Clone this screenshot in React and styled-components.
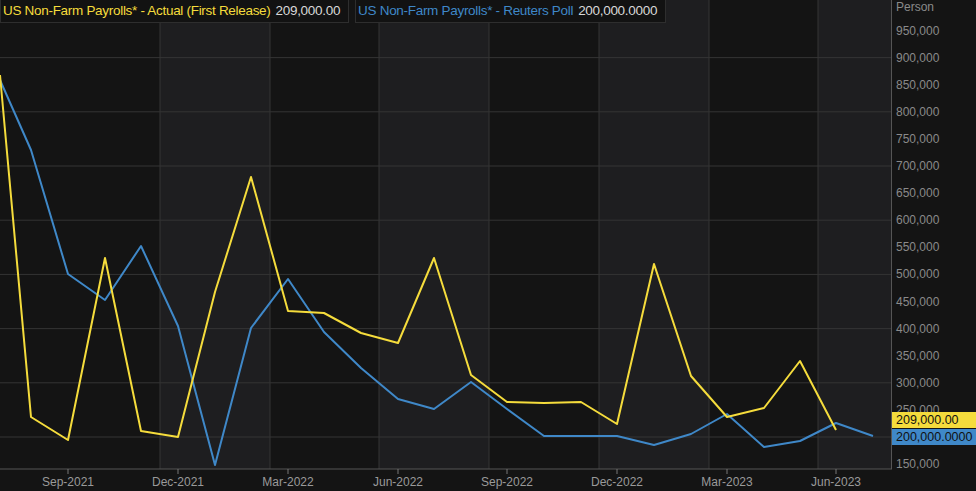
import React from "react";
import styled, { createGlobalStyle } from "styled-components";

const Global = createGlobalStyle`
  body { margin: 0; background: #141414; font-family: "Liberation Sans", Arial, sans-serif; }
`;

const Frame = styled.div`
  position: relative;
  width: 976px;
  height: 491px;
  display: flex;
  background: #141414;
  overflow: hidden;
`;

const Plot = styled.div`
  position: relative;
  width: 892px;
  height: 491px;
`;

const Legend = styled.div`
  position: absolute;
  top: 0;
  left: 0;
  display: flex;
  gap: 6px;
`;

const LegendItem = styled.div`
  background: #121212;
  border: 1px solid #2e2e2e;
  border-top: none;
  padding: 3px 8px 4px 2px;
  font-size: 13.5px;
  letter-spacing: -0.3px;
  color: ${p => p.color};
  span { color: #d8d8d8; margin-left: 5px; }
`;

const Axis = styled.div`
  position: relative;
  flex: 1;
  font-size: 12px;
  color: #8a8a8a;
`;

const AxisLabel = styled.div`
  position: absolute;
  left: 4px;
  transform: translateY(-50%);
`;

const Tag = styled.div`
  position: absolute;
  left: 0;
  right: 0;
  height: 16px;
  padding-left: 4px;
  font-size: 12.5px;
  line-height: 16px;
  color: #111;
  background: ${p => p.bg};
  transform: translateY(-50%);
`;

const yellow = [[0,75],[31,417],[68,440],[105,258],[141,431],[178,437],[215,292],[251,177],[288,311],[324,313],[361,333],[398,343],[434,258],[471,375],[507,402],[544,403],[581,402],[617,424],[654,264],[691,376],[727,417],[764,408],[800,361],[836,430]];
const blue = [[0,80],[31,150],[68,274],[105,300],[141,246],[178,326],[215,465],[251,328],[288,279],[324,332],[361,368],[398,399],[434,409],[471,382],[507,409],[544,436],[581,436],[617,436],[654,445],[691,434],[727,414],[764,447],[800,441],[836,423],[873,436]];

const yOf = v => 437 - (v - 200000) / 50000 * 27.1;
const labels = [];
for (let v = 950000; v >= 150000; v -= 50000) labels.push(v);
const vlines = [160, 270, 379, 489, 599, 709, 818];
const ticks = [[68,"Sep-2021"],[178,"Dec-2021"],[288,"Mar-2022"],[398,"Jun-2022"],[507,"Sep-2022"],[617,"Dec-2022"],[727,"Mar-2023"],[836,"Jun-2023"]];

export default function App() {
  return (
    <Frame>
      <Global />
      <Plot>
        <svg width="892" height="491" style={{ display: "block" }}>
          {[0, 2, 4, 6].map(i => (
            <rect key={i} x={vlines[i]} y="0" width={(vlines[i + 1] || 892) - vlines[i]} height="469" fill="#1e1e20" />
          ))}
          {vlines.map(x => <line key={x} x1={x} x2={x} y1="0" y2="469" stroke="#343434" />)}
          {[200000, 300000, 400000, 500000, 600000, 700000, 800000, 900000].map(v => (
            <line key={v} x1="0" x2="892" y1={yOf(v)} y2={yOf(v)} stroke="#343434" />
          ))}
          <line x1="0" x2="892" y1="469" y2="469" stroke="#555" />
          <line x1="891.5" x2="891.5" y1="0" y2="469" stroke="#555" />
          {ticks.map(([x, t]) => (
            <g key={t}>
              <line x1={x} x2={x} y1="469" y2="474" stroke="#777" />
              <text x={x} y="486" fill="#9a9a9a" fontSize="12" textAnchor="middle" fontFamily="Liberation Sans, Arial, sans-serif">{t}</text>
            </g>
          ))}
          <polyline points={blue.map(p => p.join(",")).join(" ")} fill="none" stroke="#3f88c8" strokeWidth="2" strokeLinejoin="round" />
          <polyline points={yellow.map(p => p.join(",")).join(" ")} fill="none" stroke="#f5dc3c" strokeWidth="2" strokeLinejoin="round" />
        </svg>
        <Legend>
          <LegendItem color="#f5dc3c">US Non-Farm Payrolls* - Actual (First Release)<span>209,000.00</span></LegendItem>
          <LegendItem color="#3f88c8">US Non-Farm Payrolls* - Reuters Poll<span>200,000.0000</span></LegendItem>
        </Legend>
      </Plot>
      <Axis>
        <AxisLabel style={{ top: 7 }}>Person</AxisLabel>
        {labels.filter(v => v !== 200000).map(v => (
          <AxisLabel key={v} style={{ top: yOf(v) }}>{v.toLocaleString("en-US")}</AxisLabel>
        ))}
        <Tag bg="#f5dc3c" style={{ top: 420 }}>209,000.00</Tag>
        <Tag bg="#3f88c8" style={{ top: 437 }}>200,000.0000</Tag>
      </Axis>
    </Frame>
  );
}
